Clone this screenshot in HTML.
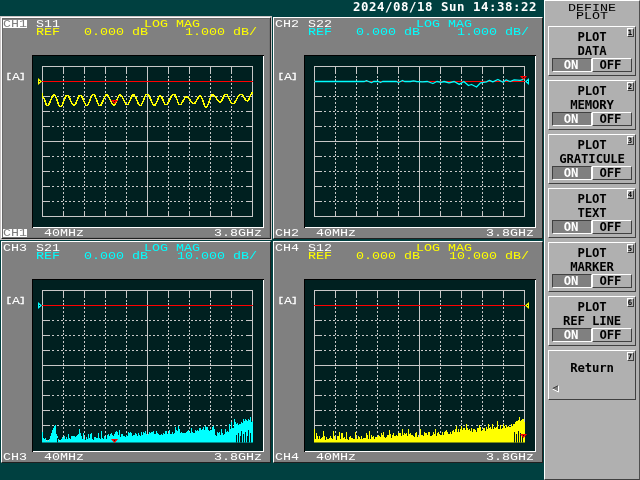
<!DOCTYPE html>
<html lang="en"><head><meta charset="utf-8"><title>Network Analyzer - Define Plot</title>
<style>
html,body{margin:0;padding:0}
body{width:640px;height:480px;overflow:hidden;background:#004040;position:relative;font-family:"DejaVu Sans Mono","Liberation Mono",monospace}
.clock{position:absolute;left:353px;top:0px;height:14px;line-height:14px;color:#fff;font-weight:bold;font-size:12.4px;letter-spacing:0.535px;white-space:pre}
.chan{position:absolute;width:270px;height:222px;background:#808080;box-sizing:border-box}
.chan:before{content:"";position:absolute;left:0;top:0;right:0;bottom:0;border:1px solid;border-color:#fff #202020 #202020 #fff;pointer-events:none}
.chan.act{outline:1px solid #c8c4c4}
.chan.act:after{content:"";position:absolute;left:1px;top:1px;right:1px;bottom:1px;border:1px solid;border-color:#686868 #747474 #747474 #686868;pointer-events:none}
.chan svg{position:absolute;left:0;top:0;display:block}
.chan,.menu,.clock{will-change:transform}
text{stroke-width:0px}
.menu{position:absolute;left:544px;top:0;width:96px;height:480px;background:#b0b0b0;box-sizing:border-box;border:1px solid;border-color:#fff #505050 #404040 #fff}
.menu .title{position:absolute;left:0;top:-1px}
.btn{position:absolute;left:3px;width:88px;height:50px;box-sizing:border-box;border:1px solid;border-color:#fff #404040 #404040 #fff;margin-top:-1px}
.lbl{position:absolute;left:-1px;width:88px;text-align:center;font-weight:bold;font-size:12.3px;letter-spacing:-0.15px;line-height:12px;height:12px;color:#000;white-space:pre}
.num{position:absolute;left:78px;top:1px;width:7px;height:9px;box-sizing:border-box;border:1px solid;border-color:#fff #404040 #404040 #fff;font-weight:bold;font-size:7.3px;line-height:8px;text-align:center;color:#000;text-indent:-1.2px}
.on,.off{position:absolute;top:31px;height:14px;width:40px;box-sizing:border-box;border:1px solid;font-weight:bold;font-size:12.3px;letter-spacing:-0.15px;line-height:12px;text-align:center}
.on{left:3px;padding-right:2px;background:#808080;color:#fff;border-color:#404040 #fff #fff #404040}
.off{left:43px;padding-right:3px;background:#b0b0b0;color:#000;border-color:#fff #404040 #404040 #fff}
.ret{position:absolute;left:3px;top:34px}
</style></head><body>
<div class="clock">2024/08/18 Sun 14:38:22</div>
<div class="chan act" style="left:1px;top:17px">
<svg width="270" height="222" viewBox="0 0 270 222" style="font-family:&quot;Liberation Mono&quot;,monospace;font-size:10.6px">
<rect x="31" y="38" width="232" height="173" fill="#002020"/>
<g shape-rendering="crispEdges"><rect x="31" y="38" width="232" height="1" fill="#000"/><rect x="31" y="38" width="1" height="173" fill="#000"/><rect x="262" y="39" width="1" height="172" fill="#fff"/><rect x="32" y="210" width="231" height="1" fill="#fff"/></g>
<g shape-rendering="crispEdges" stroke="#c8c8c8" stroke-width="1" fill="none">
<line x1="62.5" y1="51" x2="62.5" y2="199" stroke-dasharray="2 1.75"/>
<line x1="62.5" y1="49" x2="62.5" y2="55"/>
<line x1="62.5" y1="194" x2="62.5" y2="199"/>
<line x1="83.5" y1="51" x2="83.5" y2="199" stroke-dasharray="2 1.75"/>
<line x1="83.5" y1="49" x2="83.5" y2="55"/>
<line x1="83.5" y1="194" x2="83.5" y2="199"/>
<line x1="104.5" y1="51" x2="104.5" y2="199" stroke-dasharray="2 1.75"/>
<line x1="104.5" y1="49" x2="104.5" y2="55"/>
<line x1="104.5" y1="194" x2="104.5" y2="199"/>
<line x1="125.5" y1="51" x2="125.5" y2="199" stroke-dasharray="2 1.75"/>
<line x1="125.5" y1="49" x2="125.5" y2="55"/>
<line x1="125.5" y1="194" x2="125.5" y2="199"/>
<line x1="146.5" y1="49" x2="146.5" y2="199"/>
<line x1="167.5" y1="51" x2="167.5" y2="199" stroke-dasharray="2 1.75"/>
<line x1="167.5" y1="49" x2="167.5" y2="55"/>
<line x1="167.5" y1="194" x2="167.5" y2="199"/>
<line x1="188.5" y1="51" x2="188.5" y2="199" stroke-dasharray="2 1.75"/>
<line x1="188.5" y1="49" x2="188.5" y2="55"/>
<line x1="188.5" y1="194" x2="188.5" y2="199"/>
<line x1="209.5" y1="51" x2="209.5" y2="199" stroke-dasharray="2 1.75"/>
<line x1="209.5" y1="49" x2="209.5" y2="55"/>
<line x1="209.5" y1="194" x2="209.5" y2="199"/>
<line x1="230.5" y1="51" x2="230.5" y2="199" stroke-dasharray="2 1.75"/>
<line x1="230.5" y1="49" x2="230.5" y2="55"/>
<line x1="230.5" y1="194" x2="230.5" y2="199"/>
<line x1="43" y1="64.5" x2="251" y2="64.5" stroke-dasharray="2 2.2"/>
<line x1="41" y1="64.5" x2="47" y2="64.5"/>
<line x1="246" y1="64.5" x2="251" y2="64.5"/>
<line x1="43" y1="79.5" x2="251" y2="79.5" stroke-dasharray="2 2.2"/>
<line x1="41" y1="79.5" x2="47" y2="79.5"/>
<line x1="246" y1="79.5" x2="251" y2="79.5"/>
<line x1="43" y1="94.5" x2="251" y2="94.5" stroke-dasharray="2 2.2"/>
<line x1="41" y1="94.5" x2="47" y2="94.5"/>
<line x1="246" y1="94.5" x2="251" y2="94.5"/>
<line x1="43" y1="109.5" x2="251" y2="109.5" stroke-dasharray="2 2.2"/>
<line x1="41" y1="109.5" x2="47" y2="109.5"/>
<line x1="246" y1="109.5" x2="251" y2="109.5"/>
<line x1="41" y1="124.5" x2="251" y2="124.5"/>
<line x1="43" y1="139.5" x2="251" y2="139.5" stroke-dasharray="2 2.2"/>
<line x1="41" y1="139.5" x2="47" y2="139.5"/>
<line x1="246" y1="139.5" x2="251" y2="139.5"/>
<line x1="43" y1="154.5" x2="251" y2="154.5" stroke-dasharray="2 2.2"/>
<line x1="41" y1="154.5" x2="47" y2="154.5"/>
<line x1="246" y1="154.5" x2="251" y2="154.5"/>
<line x1="43" y1="169.5" x2="251" y2="169.5" stroke-dasharray="2 2.2"/>
<line x1="41" y1="169.5" x2="47" y2="169.5"/>
<line x1="246" y1="169.5" x2="251" y2="169.5"/>
<line x1="43" y1="184.5" x2="251" y2="184.5" stroke-dasharray="2 2.2"/>
<line x1="41" y1="184.5" x2="47" y2="184.5"/>
<line x1="246" y1="184.5" x2="251" y2="184.5"/>
<rect x="41.5" y="49.5" width="210" height="150"/>
</g>
<line x1="41" y1="64.5" x2="252" y2="64.5" stroke="#ff0000" stroke-width="1.2"/>
<clipPath id="cp1"><rect x="40" y="40" width="213" height="161.6"/></clipPath>
<g clip-path="url(#cp1)"><polyline points="41.50,76.00 41.65,78.25 41.80,80.50 42.31,80.56 42.82,81.34 43.33,82.45 43.84,83.79 44.36,85.21 44.87,86.55 45.38,87.66 45.89,88.44 46.40,88.50 46.90,88.50 47.40,88.10 47.90,87.33 48.40,86.35 48.90,85.22 49.40,83.99 49.90,82.71 50.40,81.48 50.90,80.35 51.40,79.37 51.90,78.60 52.40,78.20 52.90,78.20 53.41,78.20 53.92,78.64 54.42,79.49 54.93,80.56 55.44,81.80 55.95,83.15 56.45,84.55 56.96,85.90 57.47,87.14 57.98,88.21 58.48,89.06 58.99,89.50 59.50,89.50 60.01,89.50 60.52,89.07 61.02,88.25 61.53,87.21 62.04,86.00 62.55,84.68 63.05,83.32 63.56,82.00 64.07,80.79 64.58,79.75 65.08,78.93 65.59,78.50 66.10,78.50 66.63,78.50 67.16,78.88 67.69,79.59 68.22,80.50 68.75,81.56 69.28,82.71 69.82,83.89 70.35,85.04 70.88,86.10 71.41,87.01 71.94,87.72 72.47,88.10 73.00,88.10 73.52,88.10 74.03,87.61 74.55,86.77 75.07,85.71 75.58,84.50 76.10,83.20 76.62,81.90 77.13,80.69 77.65,79.63 78.17,78.79 78.68,78.30 79.20,78.30 79.71,78.30 80.22,78.69 80.72,79.44 81.23,80.38 81.74,81.48 82.25,82.68 82.75,83.92 83.26,85.12 83.77,86.22 84.28,87.16 84.78,87.91 85.29,88.30 85.80,88.30 86.30,88.30 86.80,87.87 87.30,87.05 87.80,86.01 88.30,84.80 88.80,83.48 89.30,82.12 89.80,80.80 90.30,79.59 90.80,78.55 91.30,77.73 91.80,77.30 92.30,77.30 92.81,77.30 93.32,77.74 93.82,78.58 94.33,79.63 94.84,80.87 95.35,82.21 95.85,83.59 96.36,84.93 96.87,86.17 97.38,87.22 97.88,88.06 98.39,88.50 98.90,88.50 99.41,88.50 99.92,88.09 100.42,87.30 100.93,86.31 101.44,85.16 101.95,83.90 102.45,82.60 102.96,81.34 103.47,80.19 103.98,79.20 104.48,78.41 104.99,78.00 105.50,78.00 106.00,78.00 106.50,78.23 107.00,78.80 107.50,79.53 108.00,80.39 108.50,81.35 109.00,82.38 109.50,83.42 110.00,84.45 110.50,85.41 111.00,86.27 111.50,87.00 112.00,87.57 112.50,87.80 113.00,87.80 113.52,87.80 114.03,87.31 114.55,86.47 115.07,85.41 115.58,84.20 116.10,82.90 116.62,81.60 117.13,80.39 117.65,79.33 118.17,78.49 118.68,78.00 119.20,78.00 119.72,78.00 120.25,78.38 120.77,79.09 121.29,80.00 121.82,81.06 122.34,82.21 122.86,83.39 123.38,84.54 123.91,85.60 124.43,86.51 124.95,87.22 125.48,87.60 126.00,87.60 126.50,87.60 127.00,87.22 127.50,86.51 128.00,85.60 128.50,84.54 129.00,83.39 129.50,82.21 130.00,81.06 130.50,80.00 131.00,79.09 131.50,78.38 132.00,78.00 132.50,78.00 133.02,78.00 133.53,78.41 134.05,79.20 134.56,80.19 135.08,81.34 135.59,82.60 136.11,83.90 136.62,85.16 137.14,86.31 137.65,87.30 138.17,88.09 138.68,88.50 139.20,88.50 139.73,88.50 140.26,88.06 140.79,87.22 141.32,86.17 141.85,84.93 142.38,83.59 142.92,82.21 143.45,80.87 143.98,79.63 144.51,78.58 145.04,77.74 145.57,77.30 146.10,77.30 146.63,77.30 147.16,77.63 147.69,78.34 148.21,79.24 148.74,80.30 149.27,81.47 149.80,82.70 150.33,83.93 150.86,85.10 151.39,86.16 151.91,87.06 152.44,87.77 152.97,88.10 153.50,88.10 154.02,88.10 154.54,87.51 155.05,86.58 155.57,85.43 156.09,84.13 156.61,82.77 157.13,81.47 157.65,80.32 158.16,79.39 158.68,78.80 159.20,78.80 159.71,78.80 160.22,79.36 160.73,80.22 161.24,81.30 161.75,82.52 162.25,83.78 162.76,85.00 163.27,86.08 163.78,86.94 164.29,87.50 164.80,87.50 165.31,87.50 165.81,87.33 166.32,86.79 166.83,86.11 167.33,85.31 167.84,84.40 168.34,83.42 168.85,82.40 169.36,81.38 169.86,80.40 170.37,79.49 170.88,78.69 171.38,78.01 171.89,77.47 172.39,77.30 172.90,77.30 173.40,77.30 173.90,77.81 174.40,78.69 174.90,79.79 175.40,81.05 175.90,82.40 176.40,83.75 176.90,85.01 177.40,86.11 177.90,86.99 178.40,87.50 178.90,87.50 179.41,87.50 179.92,87.21 180.42,86.65 180.93,85.94 181.44,85.11 181.95,84.21 182.45,83.29 182.96,82.39 183.47,81.56 183.98,80.85 184.48,80.29 184.99,80.00 185.50,80.00 186.03,80.00 186.56,80.20 187.09,80.63 187.61,81.17 188.14,81.81 188.67,82.51 189.20,83.25 189.73,83.99 190.26,84.69 190.79,85.33 191.31,85.87 191.84,86.30 192.37,86.50 192.90,86.50 193.42,86.50 193.93,86.13 194.45,85.49 194.97,84.70 195.48,83.78 196.00,82.80 196.52,81.82 197.03,80.90 197.55,80.11 198.07,79.47 198.58,79.10 199.10,79.10 199.60,79.10 200.10,79.65 200.60,80.58 201.10,81.76 201.60,83.11 202.10,84.55 202.60,85.99 203.10,87.34 203.60,88.52 204.10,89.45 204.60,90.00 205.10,90.00 205.61,90.00 206.12,89.52 206.62,88.61 207.13,87.46 207.64,86.11 208.15,84.65 208.65,83.15 209.16,81.69 209.67,80.34 210.18,79.19 210.68,78.28 211.19,77.80 211.70,77.80 212.20,77.80 212.70,77.96 213.20,78.37 213.70,78.89 214.20,79.51 214.70,80.19 215.20,80.93 215.70,81.67 216.20,82.41 216.70,83.09 217.20,83.71 217.70,84.23 218.20,84.64 218.70,84.80 219.20,84.80 219.71,84.80 220.22,84.32 220.73,83.58 221.24,82.65 221.75,81.60 222.25,80.50 222.76,79.45 223.27,78.52 223.78,77.78 224.29,77.30 224.80,77.30 225.30,77.30 225.80,77.58 226.30,78.18 226.80,78.95 227.30,79.85 227.80,80.85 228.30,81.90 228.80,82.95 229.30,83.95 229.80,84.85 230.30,85.62 230.80,86.22 231.30,86.50 231.80,86.50 232.30,86.50 232.80,86.35 233.30,85.86 233.80,85.25 234.30,84.52 234.80,83.70 235.30,82.82 235.80,81.90 236.30,80.98 236.80,80.10 237.30,79.28 237.80,78.55 238.30,77.94 238.80,77.45 239.30,77.30 239.80,77.30 240.31,77.30 240.82,77.55 241.32,78.04 241.83,78.65 242.34,79.37 242.85,80.15 243.35,80.95 243.86,81.73 244.37,82.45 244.88,83.06 245.38,83.55 245.89,83.80 246.40,83.80 246.91,83.80 247.42,83.15 247.93,82.21 248.44,81.07 248.95,79.80 249.46,78.53 249.97,77.39 250.48,76.45 250.99,75.80 251.50,75.80" fill="none" stroke="#ffff00" stroke-width="1.5" stroke-linejoin="round" shape-rendering="crispEdges"/></g>
<path d="M37 61 L41 64.5 L37 68 Z" fill="#ffff00"/><rect x="38" y="64" width="1" height="1" fill="#002020"/>
<path d="M109.9 83 L117.1 83 L113.5 87 Z" fill="#ff0000"/><rect x="113.0" y="84" width="1" height="1" fill="#002020"/>
<rect x="2" y="3" width="24" height="8" fill="#fff" shape-rendering="crispEdges"/>
<rect x="2" y="212" width="24" height="8" fill="#fff" shape-rendering="crispEdges"/>
<text x="2" y="10" fill="#808080" stroke="#808080" textLength="24" lengthAdjust="spacingAndGlyphs">CH1</text>
<text x="35" y="10" fill="#fff" stroke="#fff" textLength="24" lengthAdjust="spacingAndGlyphs">S11</text>
<text x="143" y="10" fill="#ffff00" stroke="#ffff00" textLength="56" lengthAdjust="spacingAndGlyphs">LOG MAG</text>
<text x="35" y="18" fill="#ffff00" stroke="#ffff00" textLength="24" lengthAdjust="spacingAndGlyphs">REF</text>
<text x="83" y="18" fill="#ffff00" stroke="#ffff00" textLength="64" lengthAdjust="spacingAndGlyphs" xml:space="preserve">0.000 dB</text>
<text x="184" y="18" fill="#ffff00" stroke="#ffff00" textLength="72" lengthAdjust="spacingAndGlyphs">1.000 dB/</text>
<text x="4.4" y="61.4" fill="#fff" stroke="#fff" style="stroke-width:0.3px" font-size="7.8" textLength="6.4" lengthAdjust="spacingAndGlyphs">[</text>
<text x="11" y="63" fill="#fff" stroke="#fff" textLength="8" lengthAdjust="spacingAndGlyphs">A</text>
<text x="18.2" y="61.4" fill="#fff" stroke="#fff" style="stroke-width:0.3px" font-size="7.8" textLength="6.4" lengthAdjust="spacingAndGlyphs">]</text>
<text x="2" y="219" fill="#808080" stroke="#808080" textLength="24" lengthAdjust="spacingAndGlyphs">CH1</text>
<text x="43" y="219" fill="#fff" stroke="#fff" textLength="40" lengthAdjust="spacingAndGlyphs">40MHz</text>
<text x="213" y="219" fill="#fff" stroke="#fff" textLength="48" lengthAdjust="spacingAndGlyphs">3.8GHz</text>
</svg></div>
<div class="chan" style="left:273px;top:17px">
<svg width="270" height="222" viewBox="0 0 270 222" style="font-family:&quot;Liberation Mono&quot;,monospace;font-size:10.6px">
<rect x="31" y="38" width="232" height="173" fill="#002020"/>
<g shape-rendering="crispEdges"><rect x="31" y="38" width="232" height="1" fill="#000"/><rect x="31" y="38" width="1" height="173" fill="#000"/><rect x="262" y="39" width="1" height="172" fill="#fff"/><rect x="32" y="210" width="231" height="1" fill="#fff"/></g>
<g shape-rendering="crispEdges" stroke="#c8c8c8" stroke-width="1" fill="none">
<line x1="62.5" y1="51" x2="62.5" y2="199" stroke-dasharray="2 1.75"/>
<line x1="62.5" y1="49" x2="62.5" y2="55"/>
<line x1="62.5" y1="194" x2="62.5" y2="199"/>
<line x1="83.5" y1="51" x2="83.5" y2="199" stroke-dasharray="2 1.75"/>
<line x1="83.5" y1="49" x2="83.5" y2="55"/>
<line x1="83.5" y1="194" x2="83.5" y2="199"/>
<line x1="104.5" y1="51" x2="104.5" y2="199" stroke-dasharray="2 1.75"/>
<line x1="104.5" y1="49" x2="104.5" y2="55"/>
<line x1="104.5" y1="194" x2="104.5" y2="199"/>
<line x1="125.5" y1="51" x2="125.5" y2="199" stroke-dasharray="2 1.75"/>
<line x1="125.5" y1="49" x2="125.5" y2="55"/>
<line x1="125.5" y1="194" x2="125.5" y2="199"/>
<line x1="146.5" y1="49" x2="146.5" y2="199"/>
<line x1="167.5" y1="51" x2="167.5" y2="199" stroke-dasharray="2 1.75"/>
<line x1="167.5" y1="49" x2="167.5" y2="55"/>
<line x1="167.5" y1="194" x2="167.5" y2="199"/>
<line x1="188.5" y1="51" x2="188.5" y2="199" stroke-dasharray="2 1.75"/>
<line x1="188.5" y1="49" x2="188.5" y2="55"/>
<line x1="188.5" y1="194" x2="188.5" y2="199"/>
<line x1="209.5" y1="51" x2="209.5" y2="199" stroke-dasharray="2 1.75"/>
<line x1="209.5" y1="49" x2="209.5" y2="55"/>
<line x1="209.5" y1="194" x2="209.5" y2="199"/>
<line x1="230.5" y1="51" x2="230.5" y2="199" stroke-dasharray="2 1.75"/>
<line x1="230.5" y1="49" x2="230.5" y2="55"/>
<line x1="230.5" y1="194" x2="230.5" y2="199"/>
<line x1="43" y1="64.5" x2="251" y2="64.5" stroke-dasharray="2 2.2"/>
<line x1="41" y1="64.5" x2="47" y2="64.5"/>
<line x1="246" y1="64.5" x2="251" y2="64.5"/>
<line x1="43" y1="79.5" x2="251" y2="79.5" stroke-dasharray="2 2.2"/>
<line x1="41" y1="79.5" x2="47" y2="79.5"/>
<line x1="246" y1="79.5" x2="251" y2="79.5"/>
<line x1="43" y1="94.5" x2="251" y2="94.5" stroke-dasharray="2 2.2"/>
<line x1="41" y1="94.5" x2="47" y2="94.5"/>
<line x1="246" y1="94.5" x2="251" y2="94.5"/>
<line x1="43" y1="109.5" x2="251" y2="109.5" stroke-dasharray="2 2.2"/>
<line x1="41" y1="109.5" x2="47" y2="109.5"/>
<line x1="246" y1="109.5" x2="251" y2="109.5"/>
<line x1="41" y1="124.5" x2="251" y2="124.5"/>
<line x1="43" y1="139.5" x2="251" y2="139.5" stroke-dasharray="2 2.2"/>
<line x1="41" y1="139.5" x2="47" y2="139.5"/>
<line x1="246" y1="139.5" x2="251" y2="139.5"/>
<line x1="43" y1="154.5" x2="251" y2="154.5" stroke-dasharray="2 2.2"/>
<line x1="41" y1="154.5" x2="47" y2="154.5"/>
<line x1="246" y1="154.5" x2="251" y2="154.5"/>
<line x1="43" y1="169.5" x2="251" y2="169.5" stroke-dasharray="2 2.2"/>
<line x1="41" y1="169.5" x2="47" y2="169.5"/>
<line x1="246" y1="169.5" x2="251" y2="169.5"/>
<line x1="43" y1="184.5" x2="251" y2="184.5" stroke-dasharray="2 2.2"/>
<line x1="41" y1="184.5" x2="47" y2="184.5"/>
<line x1="246" y1="184.5" x2="251" y2="184.5"/>
<rect x="41.5" y="49.5" width="210" height="150"/>
</g>
<line x1="41" y1="64.5" x2="252" y2="64.5" stroke="#ff0000" stroke-width="1.2"/>
<clipPath id="cp2"><rect x="40" y="40" width="213" height="161.6"/></clipPath>
<g clip-path="url(#cp2)"><polyline points="41.50,64.50 91.50,64.50 93.50,63.70 95.50,64.50 98.50,65.70 100.50,64.50 105.50,64.50 107.50,65.50 109.50,64.50 123.50,64.50 125.50,65.50 127.50,64.50 129.50,63.50 131.50,64.50 137.50,64.50 140.50,63.80 143.50,64.50 149.50,64.90 154.50,64.50 159.90,66.50 163.90,64.50 168.00,65.30 171.00,64.50 176.10,65.90 181.20,64.50 186.30,67.40 190.80,64.50 195.50,68.50 198.50,67.50 203.50,70.00 207.50,65.90 213.50,64.90 216.50,63.30 219.80,64.90 224.90,62.50 230.00,65.30 233.00,62.90 237.10,64.50 241.20,62.90 247.30,63.30 251.50,61.90" fill="none" stroke="#00ffff" stroke-width="1.3" stroke-linejoin="round"/></g>
<path d="M256 61 L252 64.5 L256 68 Z" fill="#00ffff"/><rect x="254" y="64" width="1" height="1" fill="#002020"/>
<path d="M246.9 59 L254.1 59 L250.5 63 Z" fill="#ff0000"/><rect x="250.0" y="60" width="1" height="1" fill="#002020"/>
<text x="2" y="10" fill="#fff" stroke="#fff" textLength="24" lengthAdjust="spacingAndGlyphs">CH2</text>
<text x="35" y="10" fill="#fff" stroke="#fff" textLength="24" lengthAdjust="spacingAndGlyphs">S22</text>
<text x="143" y="10" fill="#00ffff" stroke="#00ffff" textLength="56" lengthAdjust="spacingAndGlyphs">LOG MAG</text>
<text x="35" y="18" fill="#00ffff" stroke="#00ffff" textLength="24" lengthAdjust="spacingAndGlyphs">REF</text>
<text x="83" y="18" fill="#00ffff" stroke="#00ffff" textLength="64" lengthAdjust="spacingAndGlyphs" xml:space="preserve">0.000 dB</text>
<text x="184" y="18" fill="#00ffff" stroke="#00ffff" textLength="72" lengthAdjust="spacingAndGlyphs">1.000 dB/</text>
<text x="4.4" y="61.4" fill="#fff" stroke="#fff" style="stroke-width:0.3px" font-size="7.8" textLength="6.4" lengthAdjust="spacingAndGlyphs">[</text>
<text x="11" y="63" fill="#fff" stroke="#fff" textLength="8" lengthAdjust="spacingAndGlyphs">A</text>
<text x="18.2" y="61.4" fill="#fff" stroke="#fff" style="stroke-width:0.3px" font-size="7.8" textLength="6.4" lengthAdjust="spacingAndGlyphs">]</text>
<text x="2" y="219" fill="#fff" stroke="#fff" textLength="24" lengthAdjust="spacingAndGlyphs">CH2</text>
<text x="43" y="219" fill="#fff" stroke="#fff" textLength="40" lengthAdjust="spacingAndGlyphs">40MHz</text>
<text x="213" y="219" fill="#fff" stroke="#fff" textLength="48" lengthAdjust="spacingAndGlyphs">3.8GHz</text>
</svg></div>
<div class="chan" style="left:1px;top:241px">
<svg width="270" height="222" viewBox="0 0 270 222" style="font-family:&quot;Liberation Mono&quot;,monospace;font-size:10.6px">
<rect x="31" y="38" width="232" height="173" fill="#002020"/>
<g shape-rendering="crispEdges"><rect x="31" y="38" width="232" height="1" fill="#000"/><rect x="31" y="38" width="1" height="173" fill="#000"/><rect x="262" y="39" width="1" height="172" fill="#fff"/><rect x="32" y="210" width="231" height="1" fill="#fff"/></g>
<g shape-rendering="crispEdges" stroke="#c8c8c8" stroke-width="1" fill="none">
<line x1="62.5" y1="51" x2="62.5" y2="199" stroke-dasharray="2 1.75"/>
<line x1="62.5" y1="49" x2="62.5" y2="55"/>
<line x1="62.5" y1="194" x2="62.5" y2="199"/>
<line x1="83.5" y1="51" x2="83.5" y2="199" stroke-dasharray="2 1.75"/>
<line x1="83.5" y1="49" x2="83.5" y2="55"/>
<line x1="83.5" y1="194" x2="83.5" y2="199"/>
<line x1="104.5" y1="51" x2="104.5" y2="199" stroke-dasharray="2 1.75"/>
<line x1="104.5" y1="49" x2="104.5" y2="55"/>
<line x1="104.5" y1="194" x2="104.5" y2="199"/>
<line x1="125.5" y1="51" x2="125.5" y2="199" stroke-dasharray="2 1.75"/>
<line x1="125.5" y1="49" x2="125.5" y2="55"/>
<line x1="125.5" y1="194" x2="125.5" y2="199"/>
<line x1="146.5" y1="49" x2="146.5" y2="199"/>
<line x1="167.5" y1="51" x2="167.5" y2="199" stroke-dasharray="2 1.75"/>
<line x1="167.5" y1="49" x2="167.5" y2="55"/>
<line x1="167.5" y1="194" x2="167.5" y2="199"/>
<line x1="188.5" y1="51" x2="188.5" y2="199" stroke-dasharray="2 1.75"/>
<line x1="188.5" y1="49" x2="188.5" y2="55"/>
<line x1="188.5" y1="194" x2="188.5" y2="199"/>
<line x1="209.5" y1="51" x2="209.5" y2="199" stroke-dasharray="2 1.75"/>
<line x1="209.5" y1="49" x2="209.5" y2="55"/>
<line x1="209.5" y1="194" x2="209.5" y2="199"/>
<line x1="230.5" y1="51" x2="230.5" y2="199" stroke-dasharray="2 1.75"/>
<line x1="230.5" y1="49" x2="230.5" y2="55"/>
<line x1="230.5" y1="194" x2="230.5" y2="199"/>
<line x1="43" y1="64.5" x2="251" y2="64.5" stroke-dasharray="2 2.2"/>
<line x1="41" y1="64.5" x2="47" y2="64.5"/>
<line x1="246" y1="64.5" x2="251" y2="64.5"/>
<line x1="43" y1="79.5" x2="251" y2="79.5" stroke-dasharray="2 2.2"/>
<line x1="41" y1="79.5" x2="47" y2="79.5"/>
<line x1="246" y1="79.5" x2="251" y2="79.5"/>
<line x1="43" y1="94.5" x2="251" y2="94.5" stroke-dasharray="2 2.2"/>
<line x1="41" y1="94.5" x2="47" y2="94.5"/>
<line x1="246" y1="94.5" x2="251" y2="94.5"/>
<line x1="43" y1="109.5" x2="251" y2="109.5" stroke-dasharray="2 2.2"/>
<line x1="41" y1="109.5" x2="47" y2="109.5"/>
<line x1="246" y1="109.5" x2="251" y2="109.5"/>
<line x1="41" y1="124.5" x2="251" y2="124.5"/>
<line x1="43" y1="139.5" x2="251" y2="139.5" stroke-dasharray="2 2.2"/>
<line x1="41" y1="139.5" x2="47" y2="139.5"/>
<line x1="246" y1="139.5" x2="251" y2="139.5"/>
<line x1="43" y1="154.5" x2="251" y2="154.5" stroke-dasharray="2 2.2"/>
<line x1="41" y1="154.5" x2="47" y2="154.5"/>
<line x1="246" y1="154.5" x2="251" y2="154.5"/>
<line x1="43" y1="169.5" x2="251" y2="169.5" stroke-dasharray="2 2.2"/>
<line x1="41" y1="169.5" x2="47" y2="169.5"/>
<line x1="246" y1="169.5" x2="251" y2="169.5"/>
<line x1="43" y1="184.5" x2="251" y2="184.5" stroke-dasharray="2 2.2"/>
<line x1="41" y1="184.5" x2="47" y2="184.5"/>
<line x1="246" y1="184.5" x2="251" y2="184.5"/>
<rect x="41.5" y="49.5" width="210" height="150"/>
</g>
<line x1="41" y1="64.5" x2="252" y2="64.5" stroke="#ff0000" stroke-width="1.2"/>
<clipPath id="cp3"><rect x="40" y="40" width="213" height="161.6"/></clipPath>
<g clip-path="url(#cp3)"><path d="M41 201.6V191.0h1V196.5h1V198.4h1V197.0h1V199.6h1V199.0h1V199.6h1V197.8h1V195.0h1V192.0h1V189.0h1V186.5h1V184.6h1V184.0h1V192.8h1V195.0h1V198.4h1V200.2h1V199.0h1V198.4h1V196.0h1V197.0h1V195.0h1V197.8h1V196.0h1V197.8h1V193.4h1V196.5h1V197.8h1V195.0h1V195.0h1V194.6h1V195.0h1V196.0h1V195.0h1V194.0h1V193.4h1V188.4h1V191.5h1V195.0h1V197.8h1V192.0h1V197.8h1V199.0h1V196.0h1V197.8h1V192.8h1V196.5h1V193.4h1V192.0h1V197.8h1V199.0h1V196.0h1V196.0h1V197.0h1V196.5h1V192.0h1V196.5h1V197.8h1V189.6h1V197.0h1V197.8h1V195.0h1V196.0h1V197.8h1V194.0h1V192.8h1V194.6h1V193.4h1V192.0h1V194.0h1V194.6h1V193.4h1V191.0h1V189.6h1V191.0h1V194.0h1V189.0h1V195.6h1V193.3h1V192.5h1V194.6h1V194.8h1V195.6h1V193.7h1V195.2h1V190.9h1V192.2h1V190.5h1V192.4h1V195.3h1V193.5h1V194.1h1V192.1h1V192.8h1V194.9h1V191.8h1V193.9h1V194.6h1V191.1h1V193.8h1V190.6h1V192.0h1V189.7h1V193.3h1V193.9h1V193.4h1V191.1h1V191.7h1V191.0h1V191.3h1V190.1h1V193.2h1V193.1h1V189.8h1V191.6h1V193.1h1V193.6h1V194.4h1V192.7h1V194.0h1V192.4h1V193.4h1V189.8h1V189.8h1V193.3h1V192.0h1V188.5h1V193.3h1V192.6h1V190.5h1V192.5h1V191.9h1V185.5h1V189.0h1V190.3h1V184.7h1V188.1h1V191.5h1V190.9h1V192.3h1V192.0h1V192.3h1V192.0h1V191.4h1V190.1h1V189.4h1V191.4h1V191.9h1V187.2h1V191.0h1V191.9h1V191.5h1V189.2h1V189.7h1V189.2h1V189.5h1V187.1h1V186.8h1V189.1h1V188.1h1V185.6h1V189.4h1V185.0h1V185.5h1V185.7h1V188.7h1V189.9h1V189.3h1V189.4h1V185.5h1V184.5h1V187.7h1V194.2h1V194.9h1V191.2h1V192.2h1V191.3h1V194.1h1V187.5h1V191.9h1V193.5h1V192.8h1V187.6h1V191.1h1V189.7h1V191.4h1V182.6h1V187.9h1V181.4h1V186.6h1V187.0h1V178.4h1V180.7h1V183.0h1V181.7h1V183.6h1V182.5h1V182.5h1V180.8h1V181.5h1V177.5h1V179.5h1V177.6h1V178.5h1V180.2h1V178.3h1V178.7h1V175.6h1V180.7h1V180.0h1V201.6Z" fill="#00ffff" shape-rendering="crispEdges"/><path d="M56.5 197.0V202.6M235.5 194.0V202.6M237.5 192.0V202.6M239.5 195.0V202.6M240.5 190.0V202.6M242.5 193.0V202.6M244.5 191.0V202.6M246.5 195.0V202.6M247.5 189.0V202.6M249.5 192.0V202.6" stroke="#002020" stroke-width="1" fill="none" shape-rendering="crispEdges"/></g>
<path d="M37 61 L41 64.5 L37 68 Z" fill="#00ffff"/><rect x="38" y="64" width="1" height="1" fill="#002020"/>
<path d="M109.9 198 L117.1 198 L113.5 202 Z" fill="#ff0000"/><rect x="113.0" y="199" width="1" height="1" fill="#002020"/>
<text x="2" y="10" fill="#fff" stroke="#fff" textLength="24" lengthAdjust="spacingAndGlyphs">CH3</text>
<text x="35" y="10" fill="#fff" stroke="#fff" textLength="24" lengthAdjust="spacingAndGlyphs">S21</text>
<text x="143" y="10" fill="#00ffff" stroke="#00ffff" textLength="56" lengthAdjust="spacingAndGlyphs">LOG MAG</text>
<text x="35" y="18" fill="#00ffff" stroke="#00ffff" textLength="24" lengthAdjust="spacingAndGlyphs">REF</text>
<text x="83" y="18" fill="#00ffff" stroke="#00ffff" textLength="64" lengthAdjust="spacingAndGlyphs" xml:space="preserve">0.000 dB</text>
<text x="176" y="18" fill="#00ffff" stroke="#00ffff" textLength="80" lengthAdjust="spacingAndGlyphs">10.000 dB/</text>
<text x="4.4" y="61.4" fill="#fff" stroke="#fff" style="stroke-width:0.3px" font-size="7.8" textLength="6.4" lengthAdjust="spacingAndGlyphs">[</text>
<text x="11" y="63" fill="#fff" stroke="#fff" textLength="8" lengthAdjust="spacingAndGlyphs">A</text>
<text x="18.2" y="61.4" fill="#fff" stroke="#fff" style="stroke-width:0.3px" font-size="7.8" textLength="6.4" lengthAdjust="spacingAndGlyphs">]</text>
<text x="2" y="219" fill="#fff" stroke="#fff" textLength="24" lengthAdjust="spacingAndGlyphs">CH3</text>
<text x="43" y="219" fill="#fff" stroke="#fff" textLength="40" lengthAdjust="spacingAndGlyphs">40MHz</text>
<text x="213" y="219" fill="#fff" stroke="#fff" textLength="48" lengthAdjust="spacingAndGlyphs">3.8GHz</text>
</svg></div>
<div class="chan" style="left:273px;top:241px">
<svg width="270" height="222" viewBox="0 0 270 222" style="font-family:&quot;Liberation Mono&quot;,monospace;font-size:10.6px">
<rect x="31" y="38" width="232" height="173" fill="#002020"/>
<g shape-rendering="crispEdges"><rect x="31" y="38" width="232" height="1" fill="#000"/><rect x="31" y="38" width="1" height="173" fill="#000"/><rect x="262" y="39" width="1" height="172" fill="#fff"/><rect x="32" y="210" width="231" height="1" fill="#fff"/></g>
<g shape-rendering="crispEdges" stroke="#c8c8c8" stroke-width="1" fill="none">
<line x1="62.5" y1="51" x2="62.5" y2="199" stroke-dasharray="2 1.75"/>
<line x1="62.5" y1="49" x2="62.5" y2="55"/>
<line x1="62.5" y1="194" x2="62.5" y2="199"/>
<line x1="83.5" y1="51" x2="83.5" y2="199" stroke-dasharray="2 1.75"/>
<line x1="83.5" y1="49" x2="83.5" y2="55"/>
<line x1="83.5" y1="194" x2="83.5" y2="199"/>
<line x1="104.5" y1="51" x2="104.5" y2="199" stroke-dasharray="2 1.75"/>
<line x1="104.5" y1="49" x2="104.5" y2="55"/>
<line x1="104.5" y1="194" x2="104.5" y2="199"/>
<line x1="125.5" y1="51" x2="125.5" y2="199" stroke-dasharray="2 1.75"/>
<line x1="125.5" y1="49" x2="125.5" y2="55"/>
<line x1="125.5" y1="194" x2="125.5" y2="199"/>
<line x1="146.5" y1="49" x2="146.5" y2="199"/>
<line x1="167.5" y1="51" x2="167.5" y2="199" stroke-dasharray="2 1.75"/>
<line x1="167.5" y1="49" x2="167.5" y2="55"/>
<line x1="167.5" y1="194" x2="167.5" y2="199"/>
<line x1="188.5" y1="51" x2="188.5" y2="199" stroke-dasharray="2 1.75"/>
<line x1="188.5" y1="49" x2="188.5" y2="55"/>
<line x1="188.5" y1="194" x2="188.5" y2="199"/>
<line x1="209.5" y1="51" x2="209.5" y2="199" stroke-dasharray="2 1.75"/>
<line x1="209.5" y1="49" x2="209.5" y2="55"/>
<line x1="209.5" y1="194" x2="209.5" y2="199"/>
<line x1="230.5" y1="51" x2="230.5" y2="199" stroke-dasharray="2 1.75"/>
<line x1="230.5" y1="49" x2="230.5" y2="55"/>
<line x1="230.5" y1="194" x2="230.5" y2="199"/>
<line x1="43" y1="64.5" x2="251" y2="64.5" stroke-dasharray="2 2.2"/>
<line x1="41" y1="64.5" x2="47" y2="64.5"/>
<line x1="246" y1="64.5" x2="251" y2="64.5"/>
<line x1="43" y1="79.5" x2="251" y2="79.5" stroke-dasharray="2 2.2"/>
<line x1="41" y1="79.5" x2="47" y2="79.5"/>
<line x1="246" y1="79.5" x2="251" y2="79.5"/>
<line x1="43" y1="94.5" x2="251" y2="94.5" stroke-dasharray="2 2.2"/>
<line x1="41" y1="94.5" x2="47" y2="94.5"/>
<line x1="246" y1="94.5" x2="251" y2="94.5"/>
<line x1="43" y1="109.5" x2="251" y2="109.5" stroke-dasharray="2 2.2"/>
<line x1="41" y1="109.5" x2="47" y2="109.5"/>
<line x1="246" y1="109.5" x2="251" y2="109.5"/>
<line x1="41" y1="124.5" x2="251" y2="124.5"/>
<line x1="43" y1="139.5" x2="251" y2="139.5" stroke-dasharray="2 2.2"/>
<line x1="41" y1="139.5" x2="47" y2="139.5"/>
<line x1="246" y1="139.5" x2="251" y2="139.5"/>
<line x1="43" y1="154.5" x2="251" y2="154.5" stroke-dasharray="2 2.2"/>
<line x1="41" y1="154.5" x2="47" y2="154.5"/>
<line x1="246" y1="154.5" x2="251" y2="154.5"/>
<line x1="43" y1="169.5" x2="251" y2="169.5" stroke-dasharray="2 2.2"/>
<line x1="41" y1="169.5" x2="47" y2="169.5"/>
<line x1="246" y1="169.5" x2="251" y2="169.5"/>
<line x1="43" y1="184.5" x2="251" y2="184.5" stroke-dasharray="2 2.2"/>
<line x1="41" y1="184.5" x2="47" y2="184.5"/>
<line x1="246" y1="184.5" x2="251" y2="184.5"/>
<rect x="41.5" y="49.5" width="210" height="150"/>
</g>
<line x1="41" y1="64.5" x2="252" y2="64.5" stroke="#ff0000" stroke-width="1.2"/>
<clipPath id="cp4"><rect x="40" y="40" width="213" height="161.6"/></clipPath>
<g clip-path="url(#cp4)"><path d="M41 201.6V188.0h1V197.7h1V192.2h1V195.1h1V197.8h1V194.6h1V198.3h1V197.0h1V196.4h1V190.1h1V195.0h1V199.0h1V196.3h1V198.4h1V197.8h1V196.8h1V194.8h1V197.3h1V198.2h1V189.9h1V194.6h1V198.3h1V198.7h1V195.4h1V195.4h1V190.5h1V198.3h1V191.9h1V192.2h1V197.2h1V195.6h1V198.0h1V190.7h1V198.1h1V198.6h1V195.8h1V195.1h1V196.9h1V197.1h1V197.7h1V198.0h1V190.5h1V196.5h1V197.7h1V194.5h1V196.2h1V198.0h1V195.3h1V198.4h1V197.1h1V197.1h1V197.4h1V191.6h1V193.9h1V198.2h1V190.3h1V198.1h1V193.7h1V196.1h1V194.5h1V198.0h1V195.7h1V196.1h1V195.6h1V194.2h1V195.4h1V196.4h1V192.2h1V193.6h1V190.9h1V196.1h1V196.6h1V195.8h1V193.9h1V194.4h1V189.0h1V192.7h1V196.5h1V194.3h1V191.7h1V195.0h1V194.7h1V194.0h1V195.1h1V191.7h1V192.2h1V191.7h1V194.7h1V187.9h1V194.4h1V192.4h1V192.9h1V192.3h1V194.7h1V187.8h1V192.8h1V192.3h1V194.1h1V194.3h1V194.7h1V195.6h1V192.4h1V191.3h1V196.1h1V194.4h1V195.7h1V188.4h1V193.8h1V194.4h1V194.9h1V191.1h1V192.4h1V192.4h1V194.4h1V190.9h1V190.6h1V195.0h1V194.6h1V194.2h1V191.4h1V192.9h1V188.1h1V194.8h1V192.1h1V190.7h1V192.6h1V194.1h1V194.3h1V191.2h1V194.1h1V190.5h1V189.9h1V189.1h1V190.9h1V193.3h1V192.5h1V190.6h1V192.6h1V189.5h1V188.8h1V191.0h1V187.5h1V184.8h1V191.4h1V187.6h1V190.7h1V187.5h1V185.0h1V188.7h1V187.0h1V187.2h1V189.2h1V182.5h1V186.9h1V189.0h1V187.9h1V190.1h1V186.8h1V191.1h1V188.4h1V188.1h1V189.1h1V190.6h1V186.6h1V186.7h1V183.9h1V185.5h1V189.5h1V188.9h1V186.9h1V186.8h1V189.7h1V185.8h1V188.4h1V183.4h1V187.3h1V186.4h1V187.5h1V182.8h1V187.7h1V185.8h1V186.8h1V185.7h1V180.4h1V187.8h1V187.7h1V183.9h1V187.7h1V186.8h1V182.6h1V185.3h1V187.1h1V184.2h1V185.8h1V185.3h1V185.6h1V186.2h1V182.9h1V185.0h1V182.6h1V183.4h1V180.7h1V180.0h1V180.4h1V178.5h1V176.2h1V179.6h1V178.8h1V177.8h1V178.2h1V181.3h1V201.6Z" fill="#ffff00" shape-rendering="crispEdges"/><path d="M241.5 191.0V202.6M243.5 193.0V202.6M245.5 190.0V202.6M247.5 192.0V202.6M249.5 193.0V202.6" stroke="#002020" stroke-width="1" fill="none" shape-rendering="crispEdges"/></g>
<path d="M256 61 L252 64.5 L256 68 Z" fill="#ffff00"/><rect x="254" y="64" width="1" height="1" fill="#002020"/>
<path d="M246.9 193 L254.1 193 L250.5 197 Z" fill="#ff0000"/><rect x="250.0" y="194" width="1" height="1" fill="#002020"/>
<text x="2" y="10" fill="#fff" stroke="#fff" textLength="24" lengthAdjust="spacingAndGlyphs">CH4</text>
<text x="35" y="10" fill="#fff" stroke="#fff" textLength="24" lengthAdjust="spacingAndGlyphs">S12</text>
<text x="143" y="10" fill="#ffff00" stroke="#ffff00" textLength="56" lengthAdjust="spacingAndGlyphs">LOG MAG</text>
<text x="35" y="18" fill="#ffff00" stroke="#ffff00" textLength="24" lengthAdjust="spacingAndGlyphs">REF</text>
<text x="83" y="18" fill="#ffff00" stroke="#ffff00" textLength="64" lengthAdjust="spacingAndGlyphs" xml:space="preserve">0.000 dB</text>
<text x="176" y="18" fill="#ffff00" stroke="#ffff00" textLength="80" lengthAdjust="spacingAndGlyphs">10.000 dB/</text>
<text x="4.4" y="61.4" fill="#fff" stroke="#fff" style="stroke-width:0.3px" font-size="7.8" textLength="6.4" lengthAdjust="spacingAndGlyphs">[</text>
<text x="11" y="63" fill="#fff" stroke="#fff" textLength="8" lengthAdjust="spacingAndGlyphs">A</text>
<text x="18.2" y="61.4" fill="#fff" stroke="#fff" style="stroke-width:0.3px" font-size="7.8" textLength="6.4" lengthAdjust="spacingAndGlyphs">]</text>
<text x="2" y="219" fill="#fff" stroke="#fff" textLength="24" lengthAdjust="spacingAndGlyphs">CH4</text>
<text x="43" y="219" fill="#fff" stroke="#fff" textLength="40" lengthAdjust="spacingAndGlyphs">40MHz</text>
<text x="213" y="219" fill="#fff" stroke="#fff" textLength="48" lengthAdjust="spacingAndGlyphs">3.8GHz</text>
</svg></div>
<div class="menu">
<svg class="title" width="94" height="24" viewBox="0 0 94 24" style="font-family:&quot;Liberation Mono&quot;,monospace;font-size:10.6px">
<text x="23" y="11" fill="#000" stroke="#000" textLength="48" lengthAdjust="spacingAndGlyphs">DEFINE</text>
<text x="31" y="19" fill="#000" stroke="#000" textLength="32" lengthAdjust="spacingAndGlyphs">PLOT</text>
</svg>
<div class="btn" style="top:26px">
<span class="num">1</span>
<span class="lbl" style="top:4px">PLOT</span>
<span class="lbl" style="top:18px">DATA</span>
<span class="on">ON</span><span class="off">OFF</span>
</div>
<div class="btn" style="top:80px">
<span class="num">2</span>
<span class="lbl" style="top:4px">PLOT</span>
<span class="lbl" style="top:18px">MEMORY</span>
<span class="on">ON</span><span class="off">OFF</span>
</div>
<div class="btn" style="top:134px">
<span class="num">3</span>
<span class="lbl" style="top:4px">PLOT</span>
<span class="lbl" style="top:18px">GRATICULE</span>
<span class="on">ON</span><span class="off">OFF</span>
</div>
<div class="btn" style="top:188px">
<span class="num">4</span>
<span class="lbl" style="top:4px">PLOT</span>
<span class="lbl" style="top:18px">TEXT</span>
<span class="on">ON</span><span class="off">OFF</span>
</div>
<div class="btn" style="top:242px">
<span class="num">5</span>
<span class="lbl" style="top:4px">PLOT</span>
<span class="lbl" style="top:18px">MARKER</span>
<span class="on">ON</span><span class="off">OFF</span>
</div>
<div class="btn" style="top:296px">
<span class="num">6</span>
<span class="lbl" style="top:4px">PLOT</span>
<span class="lbl" style="top:18px">REF LINE</span>
<span class="on">ON</span><span class="off">OFF</span>
</div>
<div class="btn" style="top:350px">
<span class="num">7</span>
<span class="lbl" style="top:11px">Return</span>
<svg class="ret" width="9" height="9" viewBox="0 0 9 9"><path d="M0.5 3.5 L6.5 0.5 L6.5 7 Z" fill="#808080"/><path d="M0.5 3.5 L6.5 0.5" stroke="#404040" stroke-width="1" fill="none"/><path d="M6.5 0.5 L6.5 7 L0.5 4" stroke="#fff" stroke-width="1" fill="none"/></svg>
</div>
</div>
</body></html>
